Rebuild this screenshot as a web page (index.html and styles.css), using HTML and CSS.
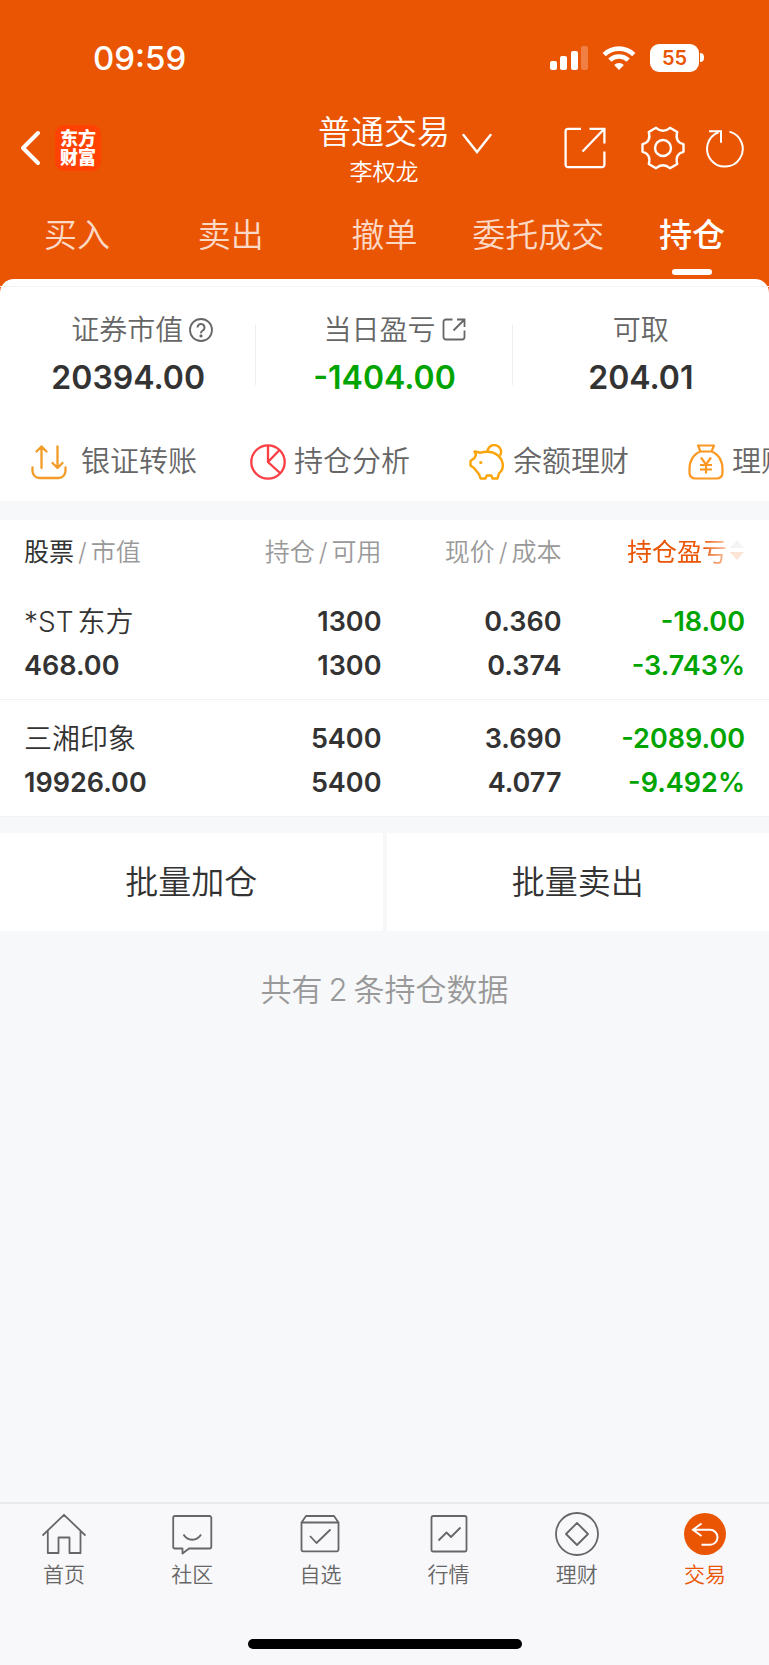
FILE: index.html
```html
<!DOCTYPE html>
<html lang="zh-CN">
<head>
<meta charset="utf-8">
<meta name="viewport" content="width=device-width, initial-scale=1">
<title>持仓</title>
<link rel="stylesheet" href="styles.css">
</head>
<body>
<div class="app">
  <header class="top">
    <div class="status">
      <span class="clock">09:59</span>
      <div class="status-icons">
        <svg class="signal" width="38" height="26" viewBox="0 0 38 26" fill="#fff" aria-hidden="true"><rect x="0" y="16" width="7" height="9" rx="2"/><rect x="10" y="11" width="7" height="14" rx="2"/><rect x="21" y="6" width="7" height="19" rx="2"/><rect x="31" y="1" width="7" height="24" rx="2" opacity=".25"/></svg>
        <svg class="wifi" width="34" height="26" viewBox="0 0 34 26" fill="none" stroke="#fff" stroke-width="4.6" aria-hidden="true"><path d="M2.2 9.6a21.3 21.3 0 0 1 29.6 0"/><path d="M7.8 15.2a13.4 13.4 0 0 1 18.4 0"/><path d="M17 25l-4.900-5a7.200 7.200 0 0 1 9.800 0z" fill="#fff" stroke="none"/></svg>
        <div class="battery"><span class="battery-level">55</span><span class="battery-cap"></span></div>
      </div>
    </div>

    <div class="bar">
      <div class="bar-left">
        <button class="icon-btn" aria-label="返回"><svg width="21" height="36" viewBox="0 0 21 36" fill="none" stroke="#fff" stroke-width="4" stroke-linecap="round" stroke-linejoin="round"><path d="M18 3L3 18l15 15"/></svg></button>
        <div class="logo"><span>东方</span><span>财富</span></div>
      </div>
      <button class="account">
        <span class="account-text"><span class="account-type">普通交易</span><span class="account-name">李权龙</span></span>
        <svg class="chevron" width="30" height="22" viewBox="0 0 30 22" fill="none" stroke="#fff" stroke-width="2.4" stroke-linecap="round"><path d="M1.500 2l13.500 17L28.500 2"/></svg>
      </button>
      <div class="bar-right">
        <button class="icon-btn share" aria-label="分享"><svg width="42" height="42" viewBox="0 0 42 42" fill="none" stroke="#fff" stroke-width="2.3"><path d="M17 1.800H4a2.400 2.400 0 0 0-2.400 2.400v33.600A2.400 2.400 0 0 0 4 40.200h34a2.400 2.400 0 0 0 2.400-2.400V24.500M25.500 1.800h14.900v14.700M40.400 1.800L18.500 24.500"/></svg></button>
        <button class="icon-btn" aria-label="设置"><svg width="44" height="44" viewBox="0 0 44 44" fill="none" stroke="#fff" stroke-width="2.4" stroke-linejoin="round"><path d="M15 1.800Q22 7.800 29 1.800L36.200 6C34.500 12.500 36.500 16.800 42.500 18.200V25.800C36.500 27.200 34.500 31.500 36.200 38L29 42.200Q22 36.200 15 42.200L7.800 38C9.500 31.500 7.500 27.200 1.500 25.800V18.200C7.500 16.800 9.500 12.500 7.800 6Z"/><circle cx="22" cy="22" r="8"/></svg></button>
        <button class="icon-btn" aria-label="刷新"><svg width="38" height="40" viewBox="0 0 38 40" fill="none" stroke="#fff" stroke-width="2"><path d="M23.500 3.600A17.800 17.800 0 1 1 12.500 4.200"/><path d="M3 3.200h12v11.500"/></svg></button>
      </div>
    </div>

    <nav class="tabs">
      <a class="tab" href="#buy">买入</a>
      <a class="tab" href="#sell">卖出</a>
      <a class="tab" href="#cancel">撤单</a>
      <a class="tab" href="#orders">委托成交</a>
      <a class="tab tab-active" href="#positions" aria-current="page">持仓</a>
    </nav>

    <section class="sheet">
      <div class="stats">
        <div class="stat">
          <div class="stat-label stat-label-help">证券市值<svg width="24" height="24" viewBox="0 0 24 24" fill="none" stroke="#666" stroke-width="1.8"><circle cx="12" cy="12" r="11"/><path d="M8.500 9.500a3.500 3.500 0 1 1 5.300 3C12.500 13.300 12 13.800 12 15.200" stroke-width="2"/><circle cx="12" cy="17.900" r=".7"/></svg></div>
          <div class="stat-value">20394.00</div>
        </div>
        <div class="stat">
          <div class="stat-label stat-label-link">当日盈亏<svg width="24" height="24" viewBox="0 0 24 24" fill="none" stroke="#666" stroke-width="1.8"><path d="M10.500 1.500H4a2.500 2.500 0 0 0-2.500 2.500v15A2.500 2.500 0 0 0 4 21.500h16a2.500 2.500 0 0 0 2.500-2.500v-6.500M15 1.500h7.500V9M22.500 1.500L11.500 12.500"/></svg></div>
          <div class="stat-value down">-1404.00</div>
        </div>
        <div class="stat">
          <div class="stat-label">可取</div>
          <div class="stat-value">204.01</div>
        </div>
      </div>
      <div class="actions">
        <a class="action action-wide" href="#transfer"><svg width="36" height="36" viewBox="0 0 36 36" fill="none" stroke="#f39b27" stroke-width="2.3" stroke-linecap="round" stroke-linejoin="round"><path d="M1.500 23.500v3.500a7 7 0 0 0 7 7h19a7 7 0 0 0 7-7v-3.500M10.500 24V2.500M5.500 7.500l5-5 5 5M26.500 2.500V24M21.500 19l5 5 5-5"/></svg>银证转账</a>
        <a class="action" href="#analysis"><svg width="36" height="36" viewBox="0 0 36 36" fill="none" stroke="#fc3d43" stroke-width="2.3"><circle cx="18" cy="18" r="16.700"/><path d="M18 1.500V18l12 11M18 18L29.500 6"/></svg>持仓分析</a>
        <a class="action" href="#balance"><svg width="36" height="36" viewBox="0 0 36 36" fill="none" stroke="#fca50a" stroke-width="2.4" stroke-linejoin="round"><path d="M5.500 7.500L11.500 8.700C18 7 24 7.500 29 11.500C35 17 35.500 25 30 29.500L28.500 34.500H23.500L22.300 31.500H17.800L16.500 34.500H11.500L10.200 30.500L5 24L1.500 21.500V17L5.500 14L7 11Z"/><path d="M18.500 7.500A6.800 6.800 0 1 1 31 11.500"/><circle cx="11.800" cy="18.500" r="1.600" fill="#fca50a" stroke="none"/></svg>余额理财</a>
        <a class="action" href="#wealth"><svg width="36" height="36" viewBox="0 0 36 36" fill="none" stroke="#fb9821" stroke-width="2.2" stroke-linejoin="round"><path d="M10 1.500H26L23.500 7.500H12.500ZM12.500 7.500C5.500 10 1.500 17 1.500 25V29a5.500 5.500 0 0 0 5.500 5.500H29a5.500 5.500 0 0 0 5.500-5.500V25C34.500 17 30.500 10 23.500 7.500"/><path d="M13 13.500l5 7 5-7M18 20.500V29.500M12 21H24M12 25.500H24"/></svg>理财</a>
      </div>
    </section>
  </header>

  <main>
    <table class="holdings">
      <thead>
        <tr>
          <th><span class="strong">股票</span><span class="slash">/</span>市值</th>
          <th>持仓<span class="slash">/</span>可用</th>
          <th>现价<span class="slash">/</span>成本</th>
          <th><button class="sort">持仓盈亏<svg width="16" height="24" viewBox="0 0 16 24"><path d="M8 2l7 8H1z" fill="#bbb"/><path d="M8 22l7-8H1z" fill="#ea5504"/></svg></button></th>
        </tr>
      </thead>
      <tbody>
        <tr>
          <td><div class="name"><span class="latin">*ST</span>东方</div><div>468.00</div></td>
          <td><div>1300</div><div>1300</div></td>
          <td><div>0.360</div><div>0.374</div></td>
          <td class="down"><div>-18.00</div><div>-3.743%</div></td>
        </tr>
        <tr>
          <td><div class="name">三湘印象</div><div>19926.00</div></td>
          <td><div>5400</div><div>5400</div></td>
          <td><div>3.690</div><div>4.077</div></td>
          <td class="down"><div>-2089.00</div><div>-9.492%</div></td>
        </tr>
      </tbody>
    </table>
    <div class="batch">
      <button class="batch-btn">批量加仓</button>
      <button class="batch-btn">批量卖出</button>
    </div>
    <p class="count">共有<span class="num">2</span>条持仓数据</p>
  </main>

  <footer class="dock">
    <nav class="dock-items">
      <a class="dock-item" href="#home"><svg width="44" height="44" viewBox="0 0 44 44" fill="none" stroke="#666" stroke-width="1.8" stroke-linejoin="round"><path d="M.5 23.500L22 2.800 43.500 23.500M5.800 18.500V41H16.500V25.500H27.500V41H38.500V18.500"/></svg>首页</a>
      <a class="dock-item" href="#community"><svg width="44" height="44" viewBox="0 0 44 44" fill="none" stroke="#666" stroke-width="1.8" stroke-linejoin="round"><path d="M5 4H39.500a1.800 1.800 0 0 1 1.800 1.800V34.700a1.800 1.800 0 0 1-1.800 1.800H19L12.500 41.500V36.500H5a1.800 1.800 0 0 1-1.800-1.800V5.800A1.800 1.800 0 0 1 5 4Z"/><path d="M13.500 22.500c4 7 13.500 7 17.500 0"/></svg>社区</a>
      <a class="dock-item" href="#watchlist"><svg width="44" height="44" viewBox="0 0 44 44" fill="none" stroke="#666" stroke-width="1.8" stroke-linejoin="round"><path d="M3.500 10.500L8 4H36L40.500 10.500V37.500a1.800 1.800 0 0 1-1.800 1.800H5.300a1.800 1.800 0 0 1-1.800-1.800ZM3.500 10.500H40.500M12 24l6.500 7L32.500 17.500"/></svg>自选</a>
      <a class="dock-item" href="#market"><svg width="44" height="44" viewBox="0 0 44 44" fill="none" stroke="#666" stroke-width="1.8" stroke-linejoin="round"><rect x="4.500" y="4" width="35" height="35.500" rx="1.800"/><path d="M11.500 28.500L19.500 20.500 24 25 33.500 15.500"/></svg>行情</a>
      <a class="dock-item" href="#finance"><svg width="44" height="44" viewBox="0 0 44 44" fill="none" stroke="#666" stroke-width="1.8" stroke-linejoin="round"><circle cx="22" cy="22" r="21"/><path d="M22 11L33 22 22 33 11 22Z"/></svg>理财</a>
      <a class="dock-item dock-active" href="#trade" aria-current="page"><svg width="44" height="44" viewBox="0 0 44 44" fill="none" stroke="#fff" stroke-width="2"><circle cx="22" cy="22" r="21" fill="#ea5504" stroke="none"/><path d="M18.500 11.500L10 17.800 18.500 24M10.500 17.800H27a7.500 7.500 0 0 1 0 15H18.500"/></svg>交易</a>
    </nav>
    <div class="home-indicator"></div>
  </footer>
</div>
</body>
</html>
```
FILE: styles.css
```css
* {
  box-sizing: border-box;
}

body {
  margin: 0;
  background: #f7f8fa;
  color: #333;
  font-family: Inter, "Noto Sans CJK SC", sans-serif;
  font-weight: 350;
}

a {
  color: inherit;
  text-decoration: none;
}

button {
  margin: 0;
  padding: 0;
  border: 0;
  background: none;
  color: inherit;
  font: inherit;
}

svg {
  display: block;
  flex: none;
}

.app {
  display: flex;
  flex-direction: column;
  min-height: 100vh;
  overflow: hidden;
}

.top {
  background: #ea5504;
  color: #fff;
}

/* Status bar */
.status {
  display: flex;
  align-items: center;
  justify-content: space-between;
  height: 106px;
  padding: 9px 65px 0 93px;
}

.clock {
  font-size: 33px;
  font-weight: 500;
}

.status-icons {
  display: flex;
  align-items: center;
  gap: 14px;
}

.battery {
  display: flex;
  align-items: center;
  gap: 1px;
}

.battery-level {
  width: 49px;
  border-radius: 9px;
  background: #fff;
  color: #ea5504;
  font-size: 20px;
  font-weight: 600;
  line-height: 28px;
  text-align: center;
}

.battery-cap {
  width: 4px;
  height: 9px;
  border-radius: 0 4px 4px 0;
  background: #fff;
}

/* Title bar */
.bar {
  display: grid;
  grid-template-columns: 1fr auto 1fr;
  align-items: center;
  height: 84px;
  padding: 0 25px 0 20px;
}

.bar-left,
.bar-right {
  display: flex;
  align-items: center;
}

.bar-left {
  gap: 14px;
}

.bar-right {
  justify-content: flex-end;
  gap: 21px;
}

.share {
  margin-right: 14px;
}

.logo {
  display: flex;
  flex-direction: column;
  justify-content: center;
  width: 46px;
  height: 46px;
  border-radius: 9px;
  background: #ff4102;
  font-size: 18px;
  font-weight: 900;
  line-height: 19px;
  text-align: center;
}

.account {
  display: flex;
  align-items: center;
  gap: 12px;
  padding-left: 46px;
}

.account-text {
  display: flex;
  flex-direction: column;
  align-items: center;
}

.account-type {
  font-size: 33px;
  line-height: 48px;
}

.account-name {
  font-size: 23px;
  line-height: 32px;
}

.chevron {
  margin-bottom: 8px;
}

/* Section tabs */
.tabs {
  display: grid;
  grid-template-columns: repeat(5, 1fr);
  padding: 21px 0 4px;
}

.tab {
  display: flex;
  flex-direction: column;
  align-items: center;
  gap: 10px;
  color: #fbd9c6;
  font-size: 33px;
  line-height: 48px;
}

.tab::after {
  content: "";
  width: 40px;
  height: 6px;
  border-radius: 3px;
}

.tab-active {
  color: #fff;
  font-weight: 500;
}

.tab-active::after {
  background: #fff;
}

/* Summary sheet */
.sheet {
  padding-top: 7px;
  border-radius: 14px 14px 0 0;
  background: #fff;
  color: #666;
}

.stats {
  display: grid;
  grid-template-columns: repeat(3, 1fr);
  padding-top: 23px;
  border-top: 1px solid #f3f3f3;
}

.stat {
  display: flex;
  flex-direction: column;
  gap: 4px;
  background: linear-gradient(#eee, #eee) right 15px / 1px 60px no-repeat;
}

.stat:last-child {
  background: none;
}

.stat-label {
  display: flex;
  align-items: center;
  justify-content: center;
  gap: 6px;
  font-size: 28px;
  line-height: 40px;
}

.stat-label-help {
  padding-left: 28px;
}

.stat-label-link {
  padding-left: 20px;
}

.stat-value {
  color: #333;
  font-size: 32px;
  font-weight: 600;
  line-height: 48px;
  text-align: center;
}

.down,
.stat-value.down {
  color: #00a400;
}

.actions {
  display: flex;
  padding: 30px 0 9px 31px;
  overflow: hidden;
}

.action {
  display: flex;
  flex: 0 0 219px;
  align-items: center;
  gap: 8px;
  font-size: 29px;
  line-height: 60px;
  white-space: nowrap;
}

.action-wide {
  gap: 14px;
}

/* Holdings */
.holdings {
  width: 100%;
  margin-top: 19px;
  border-collapse: collapse;
  table-layout: fixed;
  background: #fff;
  font-size: 27px;
  font-weight: 600;
  text-align: right;
}

.holdings th {
  height: 63px;
  padding: 0 0 3px;
  color: #999;
  font-size: 25px;
  font-weight: 350;
}

.holdings th:nth-child(1) {
  width: 220px;
}

.holdings th:nth-child(2) {
  width: 21%;
}

.holdings th:nth-child(3) {
  width: 180px;
}

.holdings td {
  padding: 17px 0 11px;
  border-bottom: 1px solid #f1f2f4;
  line-height: 44px;
}

.holdings tr > :first-child {
  padding-left: 24px;
  text-align: left;
}

.holdings tr > :last-child {
  padding-right: 24px;
}

.holdings .strong {
  color: #333;
  font-weight: 400;
}

.slash {
  margin: 0 4px;
}

.name {
  font-size: 28px;
  font-weight: 350;
}

.latin {
  margin-right: 4px;
}

.sort {
  display: inline-flex;
  align-items: center;
  gap: 2px;
  color: #ea5504;
  font-weight: 400;
  -webkit-mask-image: linear-gradient(to right, #000 64%, rgba(0, 0, 0, .16) 90%);
  mask-image: linear-gradient(to right, #000 64%, rgba(0, 0, 0, .16) 90%);
}

.batch {
  display: grid;
  grid-template-columns: 1fr 1fr;
  gap: 4px;
  margin-top: 16px;
}

.batch-btn {
  background: #fff;
  font-size: 33px;
  line-height: 98px;
}

.count {
  margin: 35px 0;
  color: #999;
  font-size: 31px;
  line-height: 48px;
  text-align: center;
}

.num {
  margin: 0 6px;
}

/* Bottom navigation */
.dock {
  margin-top: auto;
  padding-bottom: 16px;
  border-top: 2px solid #e9eaec;
  background: #f8f8fb;
}

.dock-items {
  display: grid;
  grid-template-columns: repeat(6, 1fr);
  padding-top: 8px;
}

.dock-item {
  display: flex;
  flex-direction: column;
  align-items: center;
  gap: 4px;
  color: #666;
  font-size: 21px;
  line-height: 30px;
}

.dock-active {
  color: #ea5504;
}

.home-indicator {
  width: 274px;
  height: 10px;
  margin: 49px auto 0;
  border-radius: 5px;
  background: #000;
}
```
